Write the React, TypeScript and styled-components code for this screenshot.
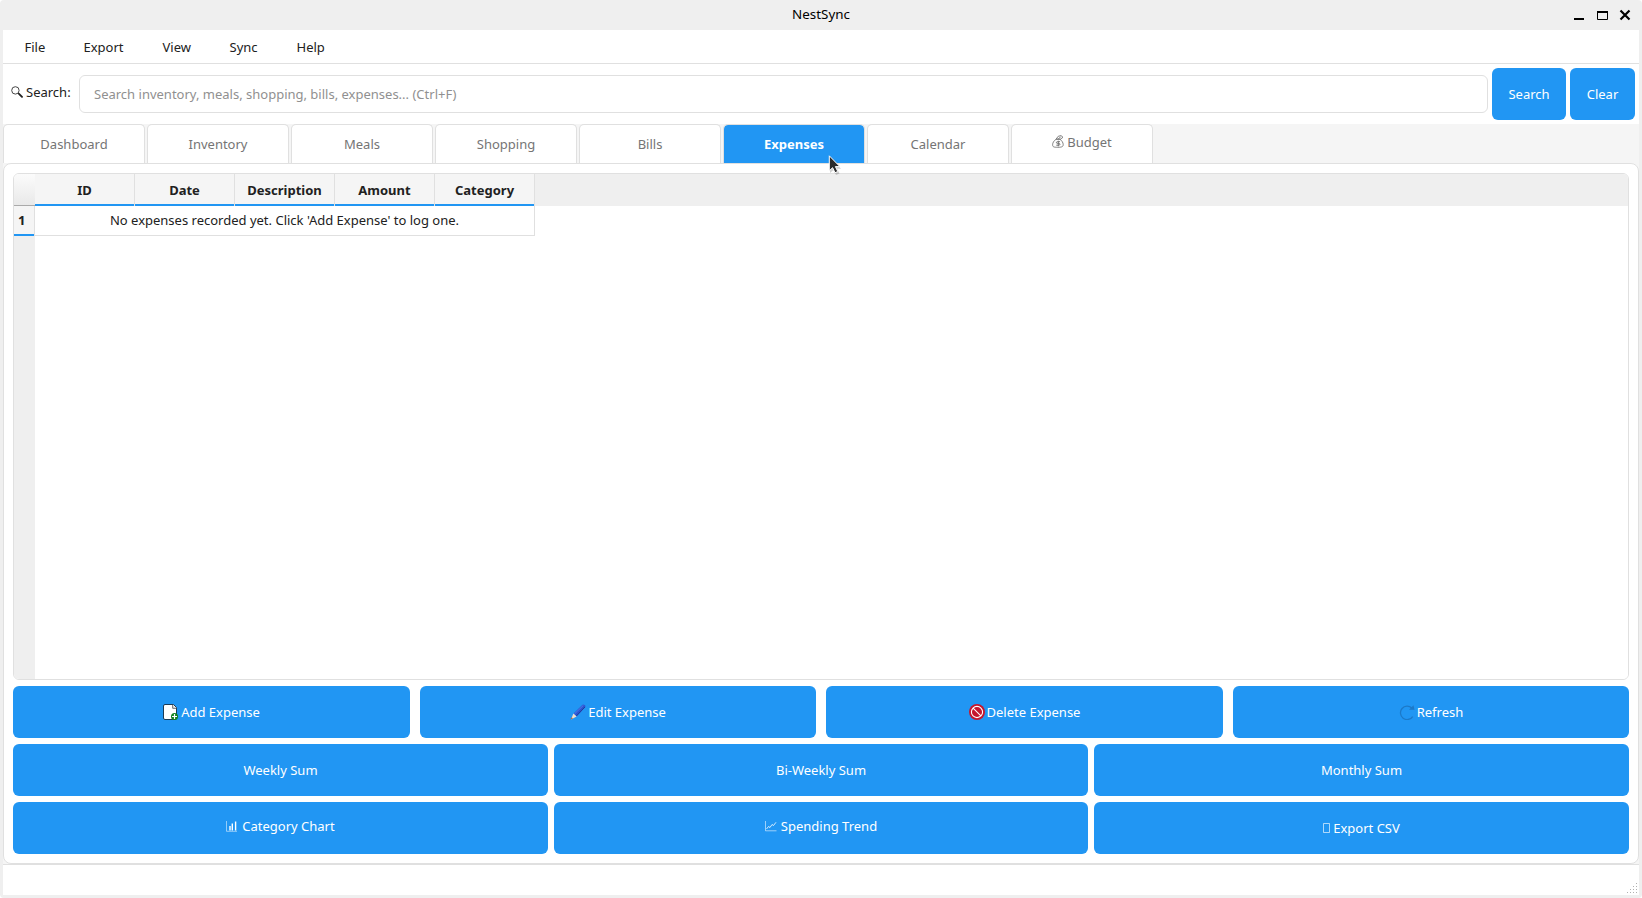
import React from "react";
import styled, { createGlobalStyle, css } from "styled-components";

const blue = "#2196f3";
const line = "#e0e0e0";
const ink = "#212121";

const GlobalStyle = createGlobalStyle`
  *, *::before, *::after { box-sizing: border-box; }
  body { margin: 0; background: #fff; }
  body, input, button {
    font-family: "Noto Sans", "DejaVu Sans", sans-serif;
    font-size: 13px;
    color: ${ink};
  }
  button { border: 0; padding: 0; margin: 0; }
`;

const Window = styled.div`
  position: relative;
  display: flex;
  flex-direction: column;
  width: 1642px;
  height: 898px;
  padding: 0 3px 3px;
  background: #efefef;
  border-radius: 4px;
  overflow: hidden;
`;

const TitleBar = styled.header`
  flex: none;
  height: 30px;
  display: grid;
  grid-template-columns: 1fr auto 1fr;
  align-items: center;
  padding-right: 8px;
  color: #000;
`;

const Title = styled.h1`
  grid-column: 2;
  margin: 0;
  padding: 0 0 3px 8px;
  font-size: 13.4px;
  font-weight: 400;
  line-height: 18px;
`;

const WindowControls = styled.svg`
  justify-self: end;
  display: block;
`;

const MenuBar = styled.nav`
  flex: none;
  height: 34px;
  display: flex;
  align-items: center;
  background: #fff;
  border-bottom: 1px solid ${line};
`;

const MenuItem = styled.span<{ $width: number }>`
  width: ${(p) => p.$width}px;
  padding-left: 21.5px;
  line-height: 18px;
`;

const SearchRow = styled.div`
  flex: none;
  height: 60px;
  display: flex;
  align-items: center;
  gap: 4px;
  padding: 0 4px;
  background: #fff;
`;

const SearchLabel = styled.label`
  width: 68px;
  display: flex;
  align-items: center;
  gap: 3px;
  padding: 0 0 4px 4px;
  line-height: 18px;
  white-space: nowrap;
`;

const SearchInput = styled.input`
  flex: 1;
  height: 38px;
  padding: 0 14px;
  border: 1px solid ${line};
  border-radius: 6px;
  outline: none;
  background: #fff;
  &::placeholder { color: #909090; opacity: 1; }
`;

const Button = styled.button<{ $width?: number; $lift?: number; $gap?: number }>`
  height: 52px;
  display: flex;
  align-items: center;
  justify-content: center;
  gap: ${(p) => p.$gap ?? 2}px;
  border-radius: 6px;
  background: ${blue};
  color: #fff;
  line-height: 18px;
  padding-bottom: ${(p) => p.$lift ?? 0}px;
  white-space: nowrap;
  ${(p) => p.$width && css`flex: none; width: ${p.$width}px;`}
`;

const TabBar = styled.div`
  flex: none;
  height: 39px;
  display: flex;
  gap: 2px;
  background: #f5f5f5;
`;

const Tab = styled.div<{ $active?: boolean; $lift?: number }>`
  width: 142px;
  display: flex;
  align-items: center;
  justify-content: center;
  gap: 3px;
  padding-bottom: ${(p) => p.$lift ?? 0}px;
  line-height: 18px;
  border: 1px solid ${line};
  border-bottom: 0;
  border-radius: 5px 5px 0 0;
  background: ${(p) => (p.$active ? blue : "#fff")};
  background-clip: padding-box;
  color: ${(p) => (p.$active ? "#fff" : "#757575")};
  font-weight: ${(p) => (p.$active ? 700 : 400)};
`;

const PaneHolder = styled.div`
  flex: none;
  height: 701px;
  background: #f5f5f5;
`;

const Pane = styled.main`
  height: 100%;
  display: flex;
  flex-direction: column;
  gap: 6px;
  padding: 9px;
  background: #fff;
  border: 1px solid ${line};
  border-radius: 8px;
`;

const TableFrame = styled.section`
  height: 507px;
  display: grid;
  grid-template-columns: 21px 1fr;
  grid-template-rows: 32px 1fr;
  border: 1px solid ${line};
  border-radius: 6px;
  overflow: hidden;
`;

const Corner = styled.div`
  background: linear-gradient(#fbfbfb, #e9e9e9);
  border-bottom: 1px solid #aaa;
`;

const HeaderRow = styled.div`
  display: flex;
  background: #efefef;
`;

const HeaderCell = styled.div`
  width: 100px;
  border-right: 1px solid ${line};
  background: #f5f5f5;
`;

const HeaderText = styled.div`
  height: 32px;
  padding-top: 1px;
  border-bottom: 2px solid ${blue};
  font-weight: 700;
  line-height: 30px;
  text-align: center;
`;

const RowHeaders = styled.div`
  background: #efefef;
`;

const RowNumber = styled.div`
  height: 30px;
  background: #f5f5f5;
  border-right: 1px solid ${line};
  font-weight: 700;
  line-height: 29px;
  padding-left: 4px;
  box-shadow: inset 0 -2px 0 ${blue};
`;

const Cells = styled.div`
  background: #fff;
`;

const EmptyMessage = styled.div`
  width: 500px;
  height: 30px;
  border-right: 1px solid ${line};
  border-bottom: 1px solid ${line};
  line-height: 29px;
  text-align: center;
`;

const ButtonRow = styled.div<{ $columns: string; $gap: number }>`
  display: grid;
  grid-template-columns: ${(p) => p.$columns};
  gap: ${(p) => p.$gap}px;
`;

const StatusBar = styled.footer`
  flex: 1;
  display: flex;
  align-items: flex-end;
  justify-content: flex-end;
  padding: 0 2px 2px;
  background: #fff;
  border-top: 1px solid ${line};
`;

const Glyph = styled.svg<{ $drop?: number }>`
  flex: none;
  display: block;
  margin-top: ${(p) => p.$drop ?? 0}px;
`;

const Pointer = styled.svg`
  position: absolute;
  left: 827px;
  top: 154px;
`;

const SearchIcon = () => (
  <Glyph width="12" height="12" viewBox="0 0 12 12" fill="none">
    <circle cx="4.4" cy="4.4" r="3.7" stroke="#333" strokeWidth="0.9" />
    <path d="M7 7l1 1" stroke="#333" strokeWidth="0.9" />
    <path d="M8 7.8l3 3" stroke="#222" strokeWidth="1.9" strokeLinecap="round" />
  </Glyph>
);

const MoneyBag = () => (
  <Glyph width="12" height="13" viewBox="0 0 12 13" fill="none" stroke="#757575" strokeWidth="0.9" $drop={-1}>
    <path d="M4 4.3C1.8 5.8 .6 7.8 .6 9.8c0 2 1 2.5 5.2 2.500s5.400-.7 5.400-2.700c0-2-1.400-4.100-3.300-5.400zM4.200 4 6.200 1.300 9 .6l2 1.700-2.800 2zM6.300 3.700 8.700 2" />
    <path d="M8 6.700H5.400c-1.300 0-1.300 1.700 0 1.700h1.500c1.400 0 1.400 1.800 0 1.800H4.300M6.300 5.700v5.600" strokeWidth="1" />
  </Glyph>
);

const AddIcon = () => (
  <Glyph width="16" height="16" viewBox="0 0 16 16">
    <path d="M2 .5h8.500l3 3V14q0 1.500-1.500 1.500H2Q.5 15.500.5 14V2Q.5.5 2 .5z" fill="#fff" stroke="#1b3a55" />
    <path d="M9.700.8v3.500h3.600" fill="#eee" stroke="#444" strokeWidth=".8" />
    <circle cx="11.500" cy="12.500" r="3.500" fill="#12801f" />
    <path d="M11.500 10v5M9 12.500h5" stroke="#fff" strokeWidth="1.200" />
  </Glyph>
);

const EditIcon = () => (
  <Glyph width="16" height="16" viewBox="0 0 16 16">
    <path d="M3.500 9.500 12.500.8q1-.8 2 .1l.6.600q.8.900 0 1.800L6.600 12.600z" fill="#2b55d0" />
    <path d="M4.400 10 13.400 1.300" stroke="#5578e8" strokeWidth="1" />
    <path d="M6.300 12 14.900 3" stroke="#243a9c" strokeWidth="1" />
    <path d="M3.400 9.500 6.600 12.500 1 15.500z" fill="#f3dccb" />
    <path d="M1.700 13.200 3 14.500l-2.500 1z" fill="#a5683f" />
  </Glyph>
);

const DeleteIcon = () => (
  <Glyph width="16" height="16" viewBox="0 0 16 16">
    <circle cx="8" cy="8" r="8" fill="#c5162e" />
    <circle cx="8" cy="8" r="5.600" fill="none" stroke="#fff" strokeWidth="1.100" />
    <path d="m4.100 4.100 7.800 7.800" stroke="#fff" strokeWidth="1.100" />
  </Glyph>
);

const RefreshIcon = () => (
  <Glyph width="16" height="16" viewBox="0 0 16 16">
    <path d="M13.700 12.600A6.700 6.700 0 1 1 12.800 4" fill="none" stroke="#1c79c8" strokeWidth="1.300" />
    <path d="M14.500 1.300 15.500 5.700H10z" fill="#1c79c8" />
  </Glyph>
);

const BarsIcon = () => (
  <Glyph width="12" height="11" viewBox="0 0 12 11">
    <path d="M.5 0v10.300H11" fill="none" stroke="#fff" strokeOpacity=".65" strokeWidth=".8" />
    <path d="M4 5v4.500M6.300 2.500v7M9.600.5v9" stroke="#fff" strokeWidth="1.400" />
  </Glyph>
);

const TrendIcon = () => (
  <Glyph width="12" height="11" viewBox="0 0 12 11" fill="none" stroke="#fff">
    <path d="M.5 0v9.800H11.500" strokeOpacity=".7" strokeWidth=".8" />
    <path d="M1.500 8 3.500 5.500 5 6.500 7 3.500 8.500 4.500 11 1.300" strokeWidth=".8" />
  </Glyph>
);

const MissingGlyph = () => (
  <Glyph width="7" height="10" viewBox="0 0 7 10" fill="none">
    <path d="M.5.5h6v9h-6z" stroke="#fff" strokeOpacity=".8" strokeWidth=".8" />
  </Glyph>
);

const gripDots = [
  [9, 0],
  [6, 3], [9, 3],
  [3, 6], [6, 6], [9, 6],
  [0, 9], [3, 9], [6, 9], [9, 9],
];

const menus = [
  { label: "File", width: 59 },
  { label: "Export", width: 79 },
  { label: "View", width: 67 },
  { label: "Sync", width: 67 },
  { label: "Help", width: 70 },
];
const tabs = ["Dashboard", "Inventory", "Meals", "Shopping", "Bills", "Expenses", "Calendar"];
const columns = ["ID", "Date", "Description", "Amount", "Category"];

export default function App() {
  return (
    <>
      <GlobalStyle />
      <Window>
        <TitleBar>
          <Title>NestSync</Title>
          <WindowControls width="57" height="30" viewBox="0 0 57 30">
            <path d="M0 18h10v2H0z" />
            <path d="M23.500 12v7.500h10V12" fill="none" stroke="#000" />
            <path d="M23 11h11v2H23z" />
            <path d="m46.500 10.500 9 9m0-9-9 9" stroke="#000" strokeWidth="2.200" />
          </WindowControls>
        </TitleBar>
        <MenuBar>
          {menus.map((m) => (
            <MenuItem key={m.label} $width={m.width}>{m.label}</MenuItem>
          ))}
        </MenuBar>
        <SearchRow>
          <SearchLabel htmlFor="search"><SearchIcon />Search:</SearchLabel>
          <SearchInput id="search" placeholder="Search inventory, meals, shopping, bills, expenses... (Ctrl+F)" />
          <Button $width={74}>Search</Button>
          <Button $width={65}>Clear</Button>
        </SearchRow>
        <TabBar>
          {tabs.map((t) => (
            <Tab key={t} $active={t === "Expenses"}>{t}</Tab>
          ))}
          <Tab $lift={4}><MoneyBag />Budget</Tab>
        </TabBar>
        <PaneHolder>
          <Pane>
            <TableFrame>
              <Corner />
              <HeaderRow>
                {columns.map((c) => (
                  <HeaderCell key={c}><HeaderText>{c}</HeaderText></HeaderCell>
                ))}
              </HeaderRow>
              <RowHeaders><RowNumber>1</RowNumber></RowHeaders>
              <Cells>
                <EmptyMessage>No expenses recorded yet. Click 'Add Expense' to log one.</EmptyMessage>
              </Cells>
            </TableFrame>
            <ButtonRow $columns="397fr 396fr 397fr 396fr" $gap={10}>
              <Button><AddIcon />Add Expense</Button>
              <Button><EditIcon />Edit Expense</Button>
              <Button><DeleteIcon />Delete Expense</Button>
              <Button><RefreshIcon />Refresh</Button>
            </ButtonRow>
            <ButtonRow $columns="535fr 534fr 535fr" $gap={6}>
              <Button>Weekly Sum</Button>
              <Button>Bi-Weekly Sum</Button>
              <Button>Monthly Sum</Button>
            </ButtonRow>
            <ButtonRow $columns="535fr 534fr 535fr" $gap={6}>
              <Button $lift={4} $gap={4}><BarsIcon />Category Chart</Button>
              <Button $lift={4} $gap={4}><TrendIcon />Spending Trend</Button>
              <Button $gap={3}><MissingGlyph />Export CSV</Button>
            </ButtonRow>
          </Pane>
        </PaneHolder>
        <StatusBar>
          <svg width="10" height="10" viewBox="0 0 10 10">
            {gripDots.map(([x, y]) => (
              <rect key={`${x}-${y}`} x={x} y={y} width="1" height="1" fill="#b0b0b0" />
            ))}
          </svg>
        </StatusBar>
        <Pointer width="16" height="22" viewBox="0 0 16 22">
          <path d="M3 3.500v15.500l3.500-3 2.500 5 3.500-1.500-2.300-4.700H14z" fill="#000" opacity=".18" />
          <path d="M2.300 1.800v15l3.300-3.100 2.400 5 2.800-1.200-2.400-4.900h4.500z" fill="#2b2b2b" stroke="#fff" strokeWidth="1" />
        </Pointer>
      </Window>
    </>
  );
}
